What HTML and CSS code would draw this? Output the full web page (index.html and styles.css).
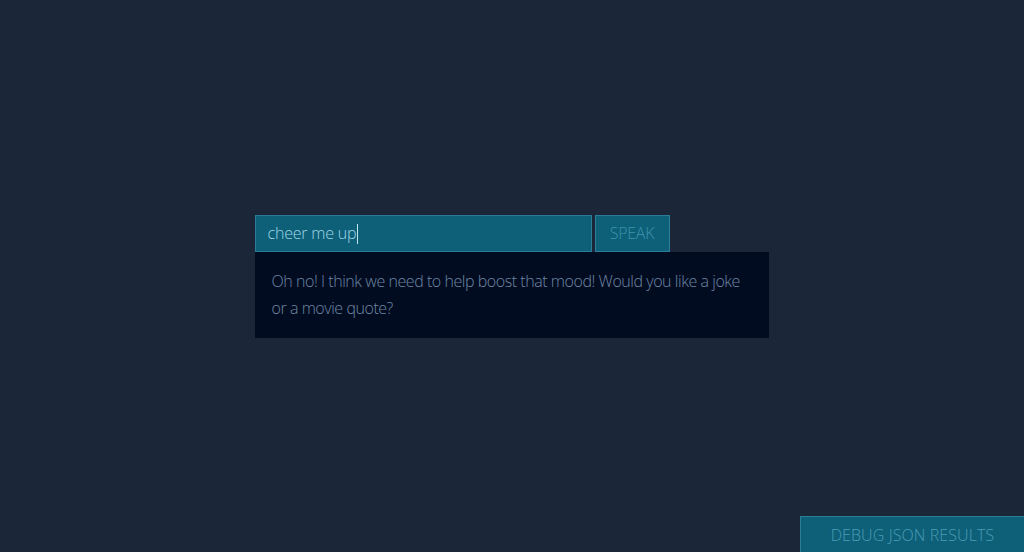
FILE: index.html
```html
<!DOCTYPE html>
<html>
<head>
<meta charset="utf-8">
<link rel="stylesheet" href="styles.css">
</head>
<body>
<main class="stage">
  <div class="chat">
    <div class="ask">
      <div class="query">cheer me up<span class="caret"></span></div>
      <button class="speak">SPEAK</button>
    </div>
    <div class="reply">Oh no! I think we need to help boost that mood! Would you like a joke or a movie quote?</div>
  </div>
</main>
<button class="debug">DEBUG JSON RESULTS</button>
</body>
</html>
```
FILE: styles.css
```css
html, body {
  margin: 0;
  padding: 0;
  height: 100%;
}
body {
  background: #1b2638;
  font-family: "Open Sans", "Liberation Sans", sans-serif;
  font-weight: 300;
  overflow: hidden;
}
.stage {
  height: 100%;
  display: flex;
  align-items: center;
  justify-content: center;
}
.chat {
  width: 514px;
  display: flex;
  flex-direction: column;
  margin-right: 1px;
}
.ask {
  display: flex;
  gap: 3px;
}
.query {
  box-sizing: border-box;
  width: 337px;
  height: 37px;
  background: #0e5f78;
  border: 1px solid #2a7d95;
  color: #9fd5e6;
  font-size: 16px;
  line-height: 35px;
  padding-left: 12px;
  letter-spacing: -0.2px;
}
.caret {
  display: inline-block;
  width: 1px;
  height: 20px;
  background: #bfe6f2;
  vertical-align: -5px;
  margin-left: 1px;
}
.speak {
  box-sizing: border-box;
  width: 75px;
  height: 37px;
  background: #0e5f78;
  border: 1px solid #2a7d95;
  color: #3c94ad;
  font-family: inherit;
  font-weight: 300;
  font-size: 16px;
  padding: 0;
  letter-spacing: -0.3px;
}
.reply {
  box-sizing: border-box;
  height: 86px;
  background: #020c21;
  color: #6d87a4;
  font-size: 16px;
  line-height: 27px;
  padding: 16px 17px;
  letter-spacing: -0.45px;
}
.debug {
  position: fixed;
  right: 0;
  bottom: 0;
  width: 224px;
  height: 36px;
  box-sizing: border-box;
  background: #0e5f78;
  border: 1px solid #2a7d95;
  border-right: 0;
  border-bottom: 0;
  color: #4a9db6;
  font-family: inherit;
  font-weight: 300;
  font-size: 16px;
  letter-spacing: 0.1px;
  padding: 0;
}
```
